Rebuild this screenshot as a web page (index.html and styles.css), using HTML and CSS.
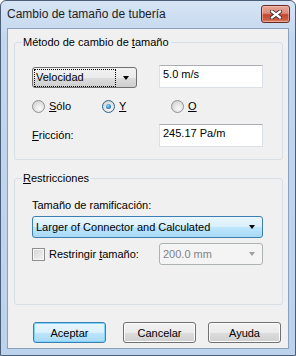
FILE: index.html
```html
<!DOCTYPE html>
<html lang="es">
<head>
  <meta charset="UTF-8">
  <title>Cambio de tamaño de tubería</title>
  <link rel="stylesheet" href="styles.css">
</head>
<body>
  <div class="window">
    <div class="titlebar">
      <span class="title">Cambio de tamaño de tubería</span>
      <button class="close" title="Cerrar">
        <svg width="12" height="9" viewBox="0 0 12 9">
          <path d="M2 1.5 L10 7.5 M10 1.5 L2 7.5" stroke="#3b2a2a" stroke-width="4" stroke-linecap="square"/>
          <path d="M2 1.5 L10 7.5 M10 1.5 L2 7.5" stroke="#ffffff" stroke-width="2.2" stroke-linecap="square"/>
        </svg>
      </button>
    </div>

    <div class="client">
      <fieldset class="group group-method">
        <legend>Método de cambio de <u>t</u>amaño</legend>

        <div class="row row-top">
          <div class="combo combo-button">
            <span class="focus-text">Velocidad</span>
            <span class="arrow"></span>
          </div>
          <div class="textbox">5.0 m/s</div>
        </div>

        <div class="row radios">
          <label class="option opt-solo"><span class="radio"></span><span><u>S</u>ólo</span></label>
          <label class="option opt-y"><span class="radio checked"></span><span><u>Y</u></span></label>
          <label class="option opt-o"><span class="radio"></span><span><u>O</u></span></label>
        </div>

        <div class="row row-friction">
          <span class="label"><u>F</u>ricción:</span>
          <div class="textbox">245.17 Pa/m</div>
        </div>
      </fieldset>

      <fieldset class="group group-limits">
        <legend><u>R</u>estricciones</legend>

        <div class="label label-branch">Tamaño de ramificación:</div>
        <div class="combo combo-hot">
          <span>Larger of Connector and Calculated</span>
          <span class="arrow"></span>
        </div>

        <div class="row row-limit">
          <label class="option"><span class="checkbox"></span><span>Restringir <u>t</u>amaño:</span></label>
          <div class="combo combo-disabled">
            <span>200.0 mm</span>
            <span class="arrow"></span>
          </div>
        </div>
      </fieldset>

      <div class="buttons">
        <button class="btn btn-default">Aceptar</button>
        <button class="btn btn-cancel">Cancelar</button>
        <button class="btn btn-help">Ayuda</button>
      </div>
    </div>
  </div>
</body>
</html>
```

FILE: styles.css
```css
body {
  margin: 0;
  padding: 0;
  background: #ffffff;
  font-family: "Liberation Sans", Arial, sans-serif;
  font-size: 11px;
  color: #000000;
}

u {
  text-decoration: underline;
  text-underline-offset: 1px;
}

/* ventana */
.window {
  width: 296px;
  height: 356px;
  box-sizing: border-box;
  border: 1px solid #4b5f78;
  border-radius: 6px 6px 0 0;
  background: linear-gradient(#d6e4f4, #c2d6ee 40px, #bdd2ec);
  padding: 0 6px 6px;
  display: flex;
  flex-direction: column;
}

.titlebar {
  height: 27px;
  display: flex;
  align-items: flex-start;
  justify-content: space-between;
}

.title {
  font-family: "Liberation Sans", Arial, sans-serif;
  font-size: 12px;
  line-height: 14px;
  margin-top: 6px;
  color: #1e1e1e;
}

.close {
  width: 29px;
  height: 18px;
  margin-top: 4px;
  margin-right: -1px;
  padding: 0;
  border: 1px solid #6a2a24;
  border-radius: 3px;
  background: linear-gradient(#e8a797, #dc8a78 45%, #c3452f 55%, #cc5d43 85%, #d88a70);
  box-shadow: inset 0 0 0 1px rgba(255, 220, 210, 0.45);
  display: flex;
  align-items: center;
  justify-content: center;
}

.client {
  flex: 1;
  border: 1px solid #8ba0bb;
  background: #f0f0f0;
}

/* grupos */
.group {
  margin: 0 5px 0 6px;
  border: 1px solid #d5dfe5;
  border-radius: 3px;
  padding: 0 0 0 17px;
  min-width: 0;
}

.group legend {
  padding: 0 2px 0 1px;
  margin-left: -10px;
  line-height: 13px;
}

.group-method {
  margin-top: 7px;
  padding-top: 16px;
  padding-bottom: 12px;
}

.group-limits {
  margin-top: 12px;
  padding-top: 14px;
  padding-bottom: 39px;
}

.row {
  display: flex;
}

.row-top {
  align-items: flex-end;
  height: 23px;
}

.radios {
  margin-top: 12px;
  height: 13px;
}

.row-friction {
  margin-top: 11px;
  align-items: center;
}

.label {
  line-height: 13px;
}

.row-friction .label {
  width: 127px;
}

.option {
  display: flex;
  align-items: center;
  gap: 4px;
  line-height: 13px;
}

.opt-solo {
  width: 70px;
}

.opt-y {
  width: 69px;
}

.radio {
  width: 11px;
  height: 11px;
  border: 1px solid #8f9292;
  border-radius: 50%;
  background: radial-gradient(circle at 60% 65%, #fbfbfb 0, #e4e4e4 45%, #c9c9c9 100%);
  display: flex;
  align-items: center;
  justify-content: center;
}

.radio.checked {
  border-color: #2c628b;
}

.radio.checked::after {
  content: "";
  width: 5px;
  height: 5px;
  border-radius: 50%;
  background: radial-gradient(circle at 40% 35%, #8ed4fb, #1d79c2 70%, #14548d);
}

.checkbox {
  width: 11px;
  height: 11px;
  border: 1px solid #8f8f8f;
  background: linear-gradient(135deg, #d4d4d4, #f4f4f4);
  box-shadow: inset 0 0 0 1px #f6f6f6;
}

.textbox {
  width: 96px;
  height: 19px;
  margin-left: auto;
  margin-right: 19px;
  border: 1px solid #dbdfe6;
  border-top-color: #abadb3;
  background: #ffffff;
  padding: 2px 3px 0;
  line-height: 13px;
}

/* combos */
.combo {
  display: flex;
  align-items: center;
  box-sizing: border-box;
  border-radius: 3px;
}

.arrow {
  margin-left: auto;
  width: 0;
  height: 0;
  border-left: 3.5px solid transparent;
  border-right: 3.5px solid transparent;
  border-top: 4px solid #000000;
}

.combo-button {
  width: 105px;
  height: 21px;
  border: 1px solid #707070;
  background: linear-gradient(#f2f2f2, #ebebeb 50%, #dddddd 51%, #cfcfcf);
  padding: 0 7px 0 2px;
}

.focus-text {
  width: 78px;
  outline: 1px dotted #000000;
  outline-offset: 0;
  padding: 1px 1px 2px;
  line-height: 13px;
}

.combo-hot {
  width: 231px;
  height: 22px;
  margin-top: 4px;
  border: 1px solid #3c7fb1;
  background: linear-gradient(#eaf6fd, #d9f0fc 50%, #bee6fd 51%, #a7d9f5);
  padding: 0 7px 0 3px;
}

.row-limit {
  margin-top: 5px;
  align-items: center;
}

.row-limit .option {
  width: 127px;
}

.combo-disabled {
  width: 104px;
  height: 22px;
  border: 1px solid #adb2b5;
  background: #f4f4f4;
  color: #838383;
  padding: 0 7px 0 3px;
}

.combo-disabled .arrow {
  border-top-color: #a0a0a0;
}

/* botones */
.buttons {
  display: flex;
  margin-top: 17px;
  padding-left: 25px;
}

.btn {
  width: 73px;
  height: 21px;
  padding: 0;
  font-family: "Liberation Sans", Arial, sans-serif;
  font-size: 11px;
  color: #000000;
  border: 1px solid #707070;
  border-radius: 3px;
  background: linear-gradient(#f2f2f2, #ebebeb 50%, #dddddd 51%, #cfcfcf);
  box-shadow: inset 0 0 0 1px #fcfcfc;
}

.btn-default {
  border-color: #3c7fb1;
  background: linear-gradient(#eaf6fd, #d9f0fc 50%, #bee6fd 51%, #a7d9f5);
  box-shadow: inset 0 0 0 1px #7fd4fe;
}

.btn-cancel {
  margin-left: 17px;
}

.btn-help {
  margin-left: 12px;
}
```
